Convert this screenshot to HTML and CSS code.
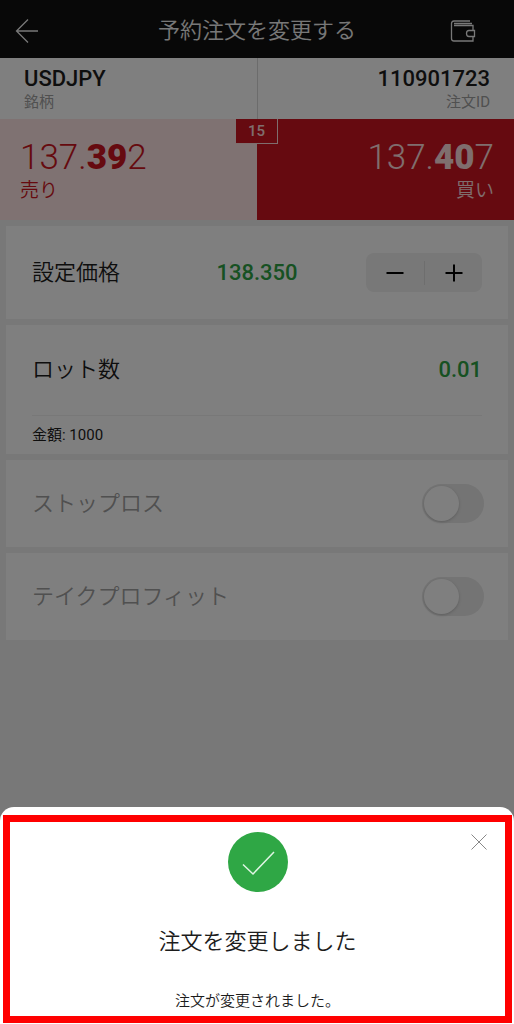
FILE: index.html
```html
<!DOCTYPE html>
<html lang="ja">
<head>
<meta charset="utf-8">
<meta name="viewport" content="width=device-width, initial-scale=1">
<title>予約注文を変更する</title>
<link rel="stylesheet" href="styles.css">
</head>
<body>
<div class="screen">
  <header class="topbar">
    <button class="icon-button" type="button" aria-label="戻る">
      <svg width="24" height="26" viewBox="0 0 24 26"><path d="M13 1.500 1.500 13 13 24.500M1.500 13H23"/></svg>
    </button>
    <h1 class="topbar-title">予約注文を変更する</h1>
    <button class="icon-button" type="button" aria-label="ウォレット">
      <svg width="26" height="24" viewBox="0 0 26 24"><path d="M20 2H4Q1.500 2 1.500 4.500V19.500Q1.500 22 4 22H23V17.500M23 11.500V6.500H4M4 4.500H22M24.500 11.500H19Q16.500 11.500 16.500 14.500T19 17.500H24.500Z"/></svg>
    </button>
  </header>
  <main>
    <section class="summary">
      <div class="summary-cell">
        <strong class="summary-value">USDJPY</strong>
        <span class="summary-label">銘柄</span>
      </div>
      <div class="summary-cell end">
        <strong class="summary-value">110901723</strong>
        <span class="summary-label">注文ID</span>
      </div>
    </section>
    <section class="quotes">
      <div class="quote sell">
        <span class="price">137.<b>39</b>2</span>
        <span class="side">売り</span>
      </div>
      <div class="quote buy">
        <span class="price">137.<b>40</b>7</span>
        <span class="side">買い</span>
      </div>
      <span class="spread">15</span>
    </section>
    <div class="cards">
      <section class="card price-row">
        <span class="label">設定価格</span>
        <output class="value">138.350</output>
        <div class="stepper">
          <button type="button" aria-label="減らす"><svg width="18" height="18" viewBox="0 0 18 18"><path d="M0.500 9H17.500"/></svg></button>
          <button type="button" aria-label="増やす"><svg width="18" height="18" viewBox="0 0 18 18"><path d="M0.500 9H17.500M9 0.500V17.500"/></svg></button>
        </div>
      </section>
      <section class="card lot">
        <div class="lot-row">
          <span class="label">ロット数</span>
          <output class="value">0.01</output>
        </div>
        <p class="amount">金額: 1000</p>
      </section>
      <section class="card toggle-row">
        <label class="label muted" for="stop-loss">ストップロス</label>
        <input class="switch" type="checkbox" role="switch" id="stop-loss">
      </section>
      <section class="card toggle-row">
        <label class="label muted" for="take-profit">テイクプロフィット</label>
        <input class="switch" type="checkbox" role="switch" id="take-profit">
      </section>
    </div>
  </main>
</div>
<div class="overlay">
  <div class="sheet" role="dialog" aria-modal="true" aria-labelledby="sheet-title">
    <div class="sheet-frame">
      <button class="close" type="button" aria-label="閉じる">
        <svg width="16" height="16" viewBox="0 0 16 16"><path d="M0.500 0.500 15.500 15.500M15.500 0.500 0.500 15.500"/></svg>
      </button>
      <svg class="success" width="60" height="60" viewBox="0 0 60 60" aria-hidden="true"><circle cx="30" cy="30" r="30"/><path d="M15 32.500 25 42 46 20"/></svg>
      <h2 class="sheet-title" id="sheet-title">注文を変更しました</h2>
      <p class="sheet-text">注文が変更されました。</p>
    </div>
  </div>
</div>
</body>
</html>
```

FILE: styles.css
```css
* {
  box-sizing: border-box;
}

body {
  margin: 0;
  background: #f0f0f0;
  color: #1c1c1c;
  font-family: Roboto, "Noto Sans CJK JP", sans-serif;
  font-size: 15px;
  line-height: 20px;
}

h1,
h2,
p {
  margin: 0;
  font-weight: 400;
}

button {
  display: flex;
  align-items: center;
  justify-content: center;
  padding: 0;
  border: 0;
  background: none;
  color: inherit;
}

svg {
  display: block;
  fill: none;
  stroke: currentColor;
}

.screen {
  min-height: 100vh;
}

.topbar {
  display: flex;
  align-items: center;
  justify-content: space-between;
  height: 58px;
  padding: 4px 30px 0 6px;
  background: #101010;
  color: #f0f0f0;
}

.topbar-title {
  flex: 1;
  padding-left: 24px;
  text-align: center;
  font-size: 22px;
  line-height: 32px;
  font-weight: 350;
}

.icon-button {
  width: 42px;
  height: 42px;
}

.icon-button svg {
  stroke-width: 1.3;
}

.summary {
  display: grid;
  grid-template-columns: 1fr 1fr;
  background: #fff;
}

.summary-cell {
  display: flex;
  flex-direction: column;
  height: 61px;
  padding: 8px 24px;
}

.summary-cell + .summary-cell {
  border-left: 1px solid #d8d8d8;
}

.end {
  align-items: flex-end;
}

.summary-value {
  font-size: 22px;
  line-height: 26px;
  font-weight: 500;
}

.summary-label {
  color: #a0a0a0;
}

.quotes {
  position: relative;
  display: grid;
  grid-template-columns: 1fr 1fr;
}

.quote {
  display: flex;
  flex-direction: column;
  height: 101px;
  padding: 20px 20px;
}

.sell {
  background: #fee4e4;
  color: #cd1520;
}

.buy {
  align-items: flex-end;
  background: #cd1520;
  color: #ffdcdc;
}

.price {
  font-size: 35px;
  line-height: 38px;
  font-weight: 300;
}

.price b {
  font-weight: 900;
}

.side {
  font-size: 19px;
  line-height: 28px;
  font-weight: 350;
}

.spread {
  position: absolute;
  top: 0;
  left: 50%;
  width: 42px;
  padding: 2px 0;
  border: solid #ffdcdc;
  border-width: 0 1px 1px 0;
  background: #cd1520;
  color: #ffdcdc;
  text-align: center;
  font-weight: 500;
  transform: translateX(-50%);
}

.cards {
  display: grid;
  gap: 6px;
  padding: 6px;
}

.card {
  padding: 0 26px;
  background: #fff;
}

.label {
  font-size: 22px;
  line-height: 32px;
  font-weight: 350;
}

.muted {
  color: #a0a0a0;
}

.value {
  color: #2fa345;
  font-size: 22px;
  line-height: 32px;
  font-weight: 500;
}

.price-row {
  display: grid;
  grid-template-columns: 1fr auto 1fr;
  align-items: center;
  height: 93px;
}

.stepper {
  display: grid;
  grid-template-columns: 1fr 1fr;
  align-items: center;
  justify-self: end;
  width: 116px;
  height: 39px;
  border-radius: 8px;
  background: #f0f0f0;
  color: #000;
}

.stepper button {
  height: 24px;
}

.stepper button + button {
  border-left: 1px solid #dcdcdc;
}

.stepper svg {
  stroke-width: 2;
}

.lot-row {
  display: flex;
  align-items: center;
  justify-content: space-between;
  height: 91px;
  border-bottom: 1px solid #f0f0f0;
}

.amount {
  padding: 9px 0;
}

.toggle-row {
  display: flex;
  align-items: center;
  justify-content: space-between;
  height: 87px;
  padding-right: 24px;
}

.switch {
  width: 62px;
  height: 39px;
  margin: 0;
  padding: 2px;
  appearance: none;
  border-radius: 20px;
  background: #e8e8e8;
}

.switch::before {
  content: "";
  display: block;
  width: 35px;
  height: 35px;
  border-radius: 50%;
  background: #fff;
  box-shadow: 0 1px 3px #bbb;
}

.switch:checked::before {
  margin-left: auto;
}

.overlay {
  position: fixed;
  inset: 0;
  display: flex;
  align-items: flex-end;
  background: rgba(0, 0, 0, 0.5);
}

.sheet {
  flex: 1;
  padding: 8px 2px 1px 3px;
  border-radius: 14px 14px 0 0;
  background: #fff;
}

.sheet-frame {
  position: relative;
  display: flex;
  flex-direction: column;
  align-items: center;
  padding: 10px 0 5px;
  border: 7px solid #f00;
}

.close {
  position: absolute;
  top: 4px;
  right: 10px;
  width: 32px;
  height: 32px;
  color: #888;
}

.success {
  fill: #2fa745;
  stroke: none;
}

.success path {
  fill: none;
  stroke: #dff5e3;
  stroke-width: 1.5;
}

.sheet-title {
  margin: 34px 0 33px;
  font-size: 22px;
  line-height: 32px;
  font-weight: 350;
}

.sheet-text {
  font-weight: 350;
}
```
